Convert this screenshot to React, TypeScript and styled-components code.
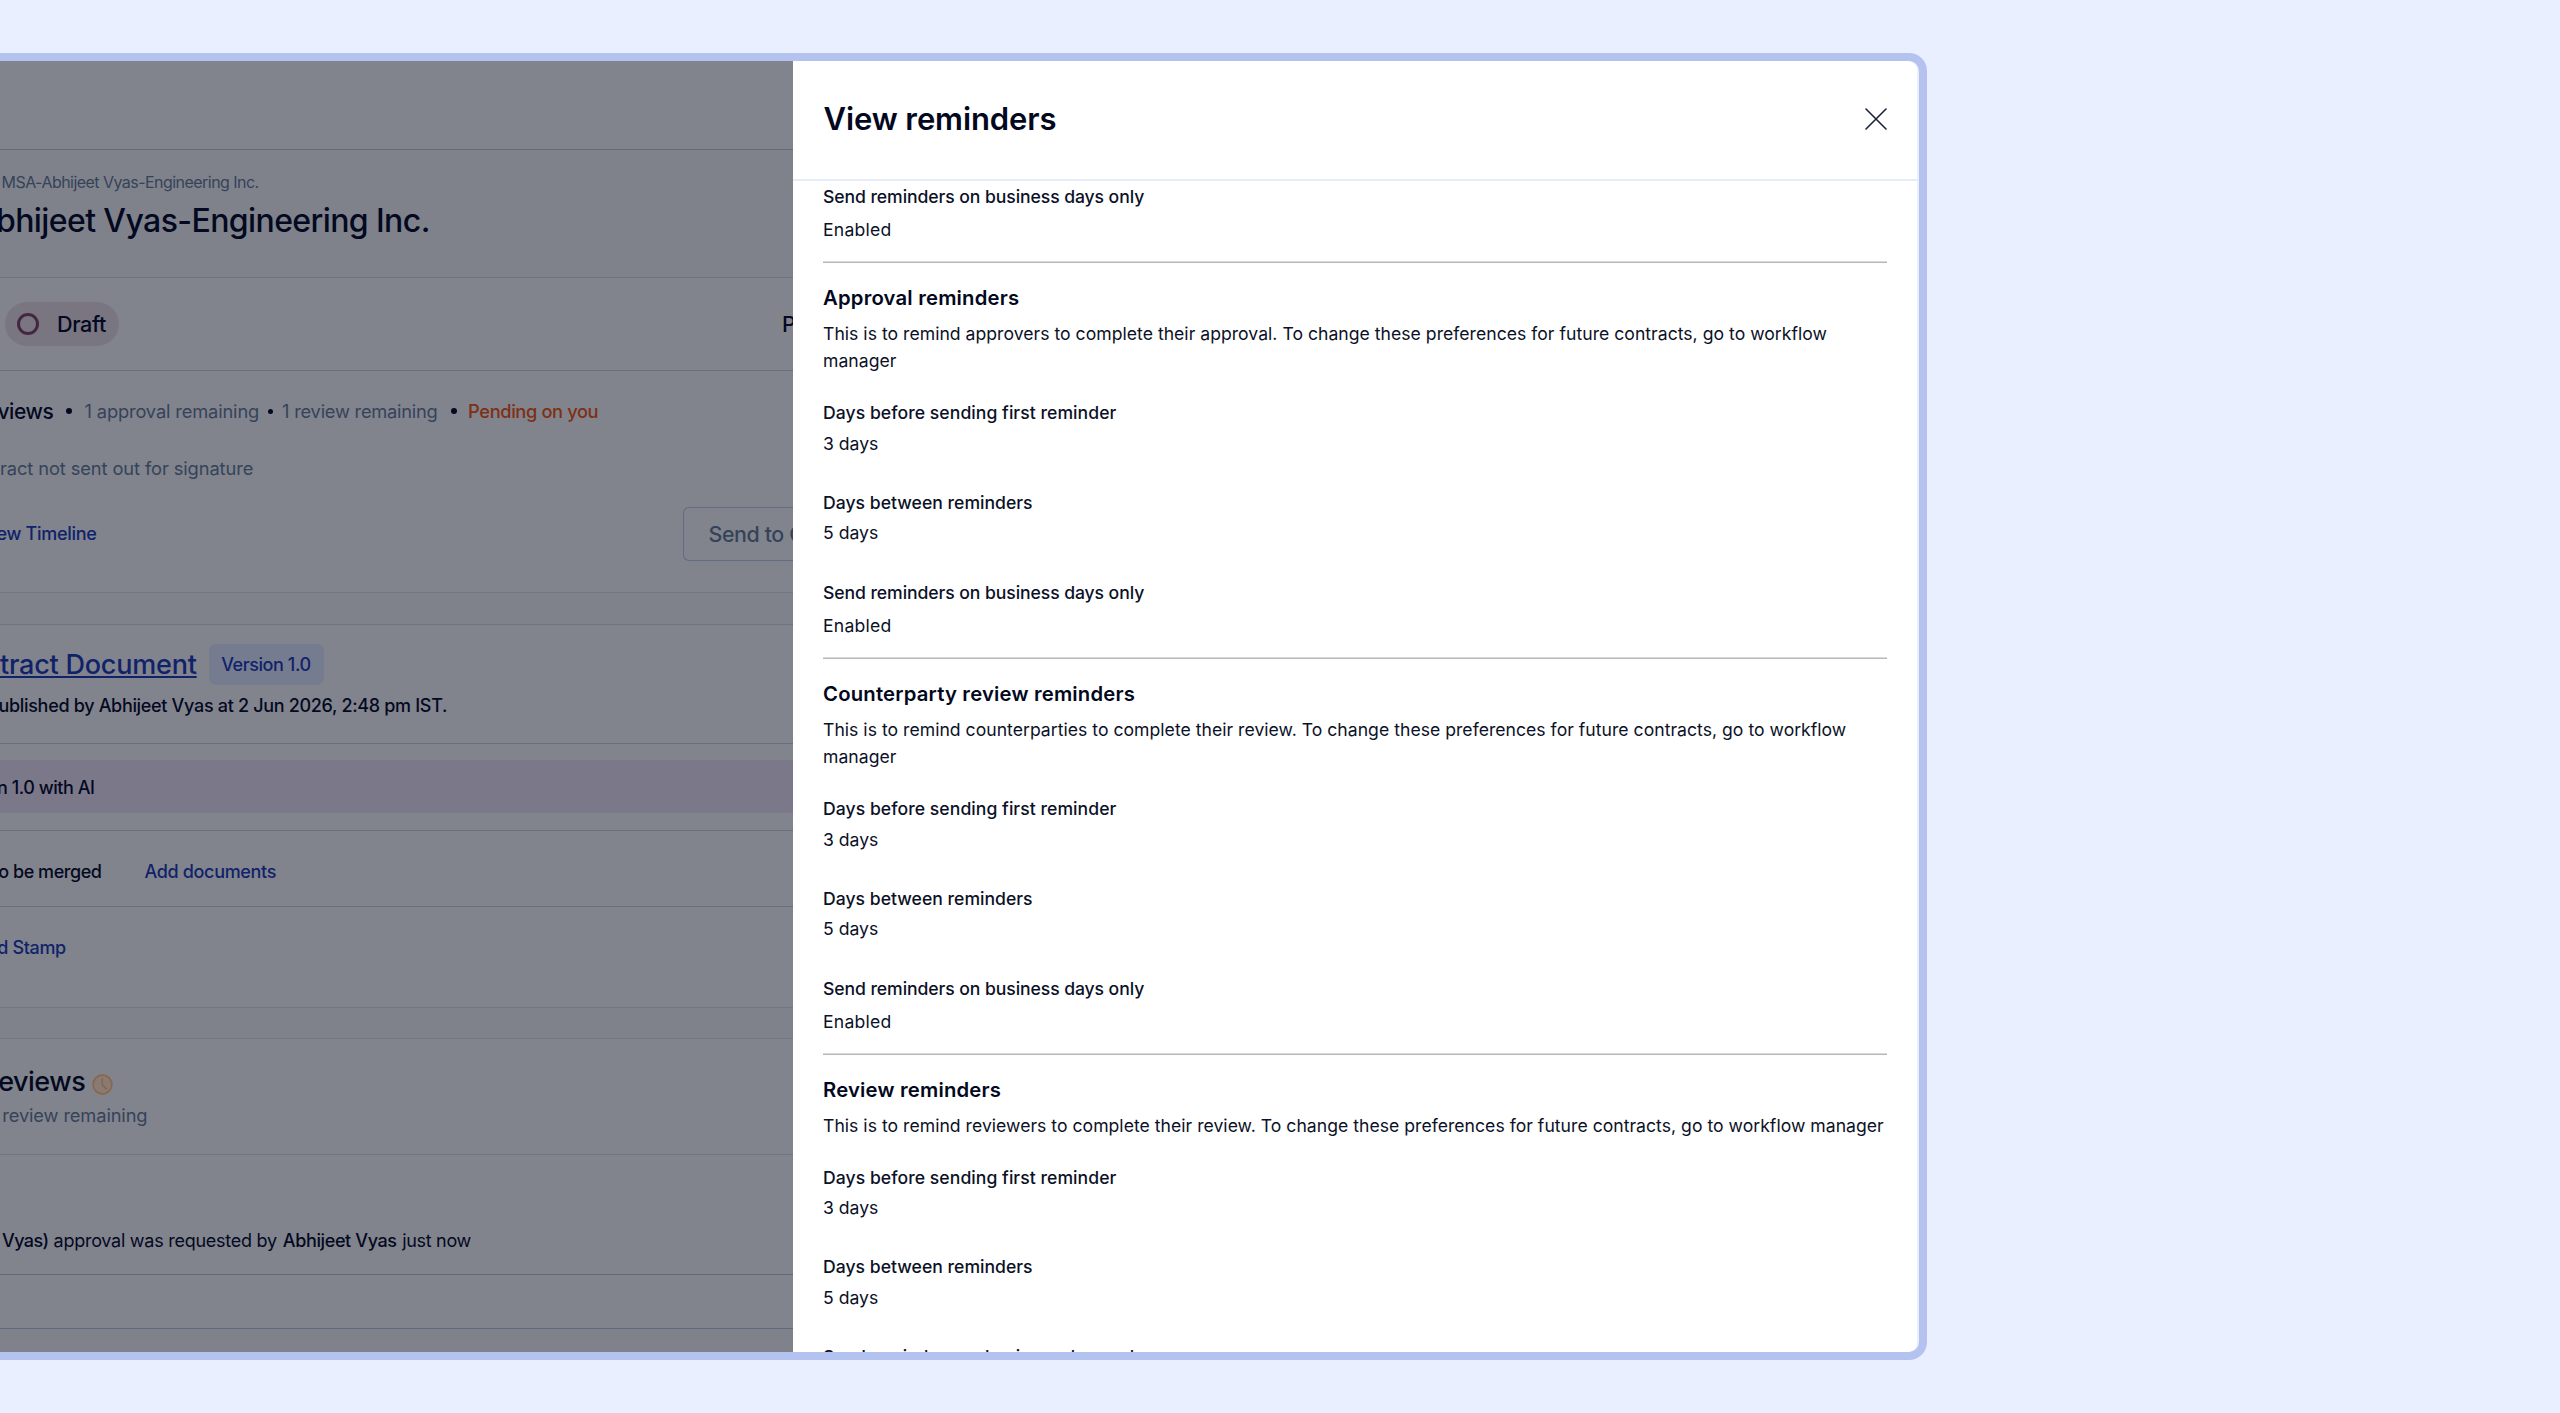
import React from 'react';
import styled, { createGlobalStyle, css } from 'styled-components';

const color = {
  page: '#e9effe',
  frame: '#b4c2f0',
  ink: '#020820',
  body: '#0b1127',
  dimBg: '#81848d',
  dimGap: '#7f828a',
  dimInk: '#040921',
  dimMuted: '#35435a',
  dimLink: '#10226a',
  dimWarn: '#7e2f14',
};

const GlobalStyle = createGlobalStyle`
  * { box-sizing: border-box; }
  html, body { margin: 0; background: ${color.page}; }
  body { font-family: Inter, 'Liberation Sans', sans-serif; overflow: hidden; }
`;

const Page = styled.div`
  height: 1413px;
  padding-top: 53px;
  background: ${color.page};
`;

const Window = styled.main`
  display: flex;
  width: 1927px;
  height: 1307px;
  border: 8px solid ${color.frame};
  border-left: 0;
  border-radius: 0 18px 18px 0;
  background: #eaf0fd;
  overflow: hidden;
`;

/* ---------- contract page, dimmed behind the drawer ---------- */

const Contract = styled.section`
  display: flex;
  flex-direction: column;
  flex: none;
  width: 793px;
  background: ${color.dimGap};
  overflow: hidden;
`;

const Block = styled.div<{ $h: number; $line: string; $top?: number; $gap?: boolean }>`
  flex: none;
  height: ${(p) => p.$h}px;
  padding-top: ${(p) => p.$top ?? 0}px;
  border-bottom: 1px solid ${(p) => p.$line};
  background: ${(p) => (p.$gap ? color.dimGap : color.dimBg)};
`;

const Line = styled.div<{ $mt?: number; $h?: number }>`
  display: flex;
  align-items: center;
  height: ${(p) => p.$h ?? 30}px;
  margin-top: ${(p) => p.$mt ?? 0}px;
  white-space: nowrap;
`;

type Tone = 'ink' | 'muted' | 'link' | 'warn';
const tones: Record<Tone, string> = {
  ink: color.dimInk,
  muted: color.dimMuted,
  link: color.dimLink,
  warn: color.dimWarn,
};

const Text = styled.span<{ $size?: number; $medium?: boolean; $ls?: number; $ml?: number; $tone?: Tone }>`
  flex: none;
  white-space: pre;
  font-size: ${(p) => p.$size ?? 18}px;
  font-weight: ${(p) => (p.$medium ? 500 : 400)};
  letter-spacing: ${(p) => p.$ls ?? -0.3}px;
  margin-left: ${(p) => p.$ml ?? 0}px;
  color: ${(p) => tones[p.$tone ?? 'ink']};
`;

const DocumentLink = styled(Text)`
  text-decoration: underline;
  text-decoration-thickness: 2px;
  text-underline-offset: 2px;
  text-decoration-skip-ink: none;
`;

const Dot = styled.i<{ $d: number; $ml: number }>`
  flex: none;
  width: ${(p) => p.$d}px;
  height: ${(p) => p.$d}px;
  margin-left: ${(p) => p.$ml}px;
  border-radius: 50%;
  background: ${color.dimInk};
`;

const StatusBar = styled.div`
  display: flex;
  align-items: center;
  justify-content: space-between;
  height: 92px;
  padding-left: 5px;
`;

const StatusPill = styled.div`
  display: flex;
  align-items: center;
  width: 114px;
  height: 44px;
  padding-left: 12px;
  border-radius: 22px;
  background: #7a7681;
`;

const StatusRing = styled.i`
  width: 22px;
  height: 22px;
  border: 3px solid #452640;
  border-radius: 50%;
`;

const Cut = styled.div`
  width: 11px;
  overflow: hidden;
`;

const Actions = styled.div`
  display: flex;
  align-items: center;
  justify-content: space-between;
  height: 54px;
  margin-top: 24px;
`;

const SendButton = styled.div`
  display: flex;
  align-items: center;
  width: 110px;
  height: 54px;
  padding-left: 24.5px;
  border: 1.5px solid #606d84;
  border-right: 0;
  border-radius: 6px 0 0 6px;
  overflow: hidden;
`;

const Badge = styled.div`
  display: flex;
  align-items: center;
  width: 115px;
  height: 41px;
  margin-left: 12px;
  padding-left: 12.5px;
  border-radius: 7px;
  background: #767c8f;
`;

const Banner = styled.div`
  display: flex;
  align-items: center;
  height: 53px;
  margin-top: 16px;
  padding-top: 1px;
  background: #7b788a;
`;

const ClockSvg = styled.svg`
  flex: none;
  margin: 6px 0 0 7px;
`;

const Clock = () => (
  <ClockSvg width="21" height="21" viewBox="0 0 21 21" fill="#8a7a74" stroke="#8a6543" strokeWidth="1.5">
    <circle cx="10.5" cy="10.5" r="9.4" />
    <path d="M10.3 4.3v6.6l4.3 4.2" fill="none" />
  </ClockSvg>
);

/* ---------- reminders drawer ---------- */

const Drawer = styled.aside`
  display: flex;
  flex-direction: column;
  flex: none;
  width: 1124px;
  background: #fff;
  border-radius: 0 9px 9px 0;
  overflow: hidden;
`;

const DrawerHeader = styled.header`
  display: flex;
  flex: none;
  align-items: center;
  justify-content: space-between;
  height: 120px;
  padding: 0 30px 2px 30.5px;
  border-bottom: 2px solid #e3ecf8;
`;

const DrawerTitle = styled.h1`
  margin: 0;
  font-size: 31px;
  line-height: 40px;
  font-weight: 600;
  letter-spacing: -0.1px;
  color: ${color.ink};
`;

const DrawerBody = styled.div`
  flex: 1;
  min-height: 0;
  padding: 0 30px;
  overflow: hidden;
`;

const Rule = styled.hr`
  height: 2px;
  margin: 16px 0 19.5px;
  border: 0;
  border-top: 1px solid #d9dade;
  border-bottom: 1px solid #b7b8be;
`;

const GroupTitle = styled.h2`
  margin: 0 0 7px;
  font-size: 20.3px;
  line-height: 30px;
  font-weight: 600;
  letter-spacing: 0.19px;
  color: ${color.ink};
`;

const itemText = css`
  margin: 0;
  font-size: 17.6px;
  color: ${color.body};
`;

const Description = styled.p`
  ${itemText}
  padding-bottom: 23.5px;
  line-height: 27.5px;
  letter-spacing: 0.022px;
`;

const Label = styled.dt<{ $ls: number; $last?: boolean }>`
  ${itemText}
  padding-top: ${(p) => (p.$last ? 0.5 : 0)}px;
  line-height: 30px;
  font-weight: 500;
  letter-spacing: ${(p) => p.$ls}px;
`;

const Value = styled.dd<{ $last?: boolean }>`
  ${itemText}
  line-height: 30px;
  margin-top: ${(p) => (p.$last ? 3.5 : 0.5)}px;
  margin-bottom: ${(p) => (p.$last ? 0 : 29)}px;
  letter-spacing: ${(p) => (p.$last ? 0.24 : 0)}px;
`;

const List = styled.dl`
  margin: 0;
`;

const BusinessDays = () => (
  <>
    <Label $ls={-0.08} $last>Send reminders on business days only</Label>
    <Value $last>Enabled</Value>
  </>
);

const ReminderGroup = ({ title, text }: { title: string; text: string }) => (
  <>
    <Rule />
    <GroupTitle>{title}</GroupTitle>
    <Description>{text}</Description>
    <List>
      <Label $ls={0.05}>Days before sending first reminder</Label>
      <Value>3 days</Value>
      <Label $ls={0.01}>Days between reminders</Label>
      <Value>5 days</Value>
      <BusinessDays />
    </List>
  </>
);

const suffix = 'To change these preferences for future contracts, go to workflow manager';
const groups = [
  { title: 'Approval reminders', text: `This is to remind approvers to complete their approval. ${suffix}` },
  { title: 'Counterparty review reminders', text: `This is to remind counterparties to complete their review. ${suffix}` },
  { title: 'Review reminders', text: `This is to remind reviewers to complete their review. ${suffix}` },
];

export default function App() {
  return (
    <Page>
      <GlobalStyle />
      <Window>
        <Contract>
          <Block $h={89} $line="#65687c" />
          <Block $h={128} $line="#6f7283" $top={17} $gap>
            <Line>
              <Text $size={16} $ls={-0.54} $ml={1.5} $tone="muted">MSA-Abhijeet Vyas-Engineering Inc.</Text>
            </Line>
            <Line $h={40} $mt={3}>
              <Text $size={32} $medium $ls={-0.6} $ml={-4}>bhijeet Vyas-Engineering Inc.</Text>
            </Line>
          </Block>
          <Block $h={93} $line="#6b6e78">
            <StatusBar>
              <StatusPill>
                <StatusRing />
                <Text $size={21.6} $medium $ls={-0.38} $ml={18}>Draft</Text>
              </StatusPill>
              <Cut>
                <Text $size={21.6} $medium>P</Text>
              </Cut>
            </StatusBar>
          </Block>
          <Block $h={222} $line="#6f7986" $top={25}>
            <Line>
              <Text $size={21} $medium $ls={-0.4} $ml={-2.6}>views</Text>
              <Dot $d={6.5} $ml={12.5} />
              <Text $size={18.3} $ls={-0.15} $ml={12} $tone="muted">1 approval remaining</Text>
              <Dot $d={5} $ml={9} />
              <Text $size={18.3} $ls={-0.24} $ml={9} $tone="muted">1 review remaining</Text>
              <Dot $d={6.5} $ml={13} />
              <Text $size={18.3} $medium $ls={-0.39} $ml={11} $tone="warn">Pending on you</Text>
            </Line>
            <Line $mt={26.5}>
              <Text $size={18.3} $ls={-0.1} $tone="muted">ract not sent out for signature</Text>
            </Line>
            <Actions>
              <Text $medium $ml={-3.5} $tone="link">ew Timeline</Text>
              <SendButton>
                <Text $size={21.4} $medium $ls={-0.4} $tone="muted">Send to C</Text>
              </SendButton>
            </Actions>
          </Block>
          <Block $h={32} $line="#6f7283" $gap />
          <Block $h={119} $line="#6b6e78" $top={19}>
            <Line $h={41}>
              <DocumentLink $size={27} $medium $ls={-0.22} $tone="link">tract Document</DocumentLink>
              <Badge>
                <Text $ls={-0.42} $medium $tone="link">Version 1.0</Text>
              </Badge>
            </Line>
            <Line $mt={5}>
              <Text $medium $ls={-0.32} $ml={-1.5}>ublished by Abhijeet Vyas at 2 Jun 2026, 2:48 pm IST.</Text>
            </Line>
          </Block>
          <Block $h={87} $line="#6b6e78">
            <Banner>
              <Text $medium $ls={-0.45} $ml={-3}>n 1.0 with AI</Text>
            </Banner>
          </Block>
          <Block $h={76} $line="#6b6e78" $top={25.5}>
            <Line>
              <Text $medium $ls={-0.45} $ml={-1.8}>o be merged</Text>
              <Text $medium $ls={-0.34} $ml={43} $tone="link">Add documents</Text>
            </Line>
          </Block>
          <Block $h={101} $line="#6e7885" $top={25.5}>
            <Line>
              <Text $medium $ls={-0.35} $ml={-2.8} $tone="link">d Stamp</Text>
            </Line>
          </Block>
          <Block $h={31} $line="#6f7986" $gap />
          <Block $h={116} $line="#6f7485" $top={24}>
            <Line $h={36}>
              <Text $size={27} $medium $ls={-0.5} $ml={-1.8}>eviews</Text>
              <Clock />
            </Line>
            <Line $mt={1}>
              <Text $size={18.3} $ls={-0.13} $ml={2.3} $tone="muted">review remaining</Text>
            </Line>
          </Block>
          <Block $h={120} $line="#5f6a80" $top={70.5}>
            <Line>
              <Text $medium $ls={-0.6} $ml={2}>Vyas)</Text>
              <Text $ls={-0.26} $ml={5}>approval was requested by</Text>
              <Text $medium $ls={-0.38} $ml={6}>Abhijeet Vyas</Text>
              <Text $ls={-0.3} $ml={5.5}>just now</Text>
            </Line>
          </Block>
          <Block $h={54} $line="#5f6a80" />
        </Contract>

        <Drawer>
          <DrawerHeader>
            <DrawerTitle>View reminders</DrawerTitle>
            <svg width="22" height="22" viewBox="0 0 22 22" stroke="#1b2138" strokeWidth="1.6" strokeLinecap="round">
              <path d="M1 1l20 20M21 1L1 21" />
            </svg>
          </DrawerHeader>
          <DrawerBody>
            <List>
              <BusinessDays />
            </List>
            {groups.map((group) => (
              <ReminderGroup key={group.title} {...group} />
            ))}
          </DrawerBody>
        </Drawer>
      </Window>
    </Page>
  );
}
